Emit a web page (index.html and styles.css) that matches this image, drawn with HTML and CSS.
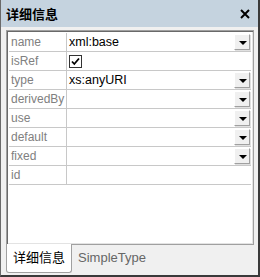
FILE: index.html
```html
<!DOCTYPE html>
<html>
<head>
<meta charset="utf-8">
<link rel="stylesheet" href="styles.css">
</head>
<body>
<div class="window">
  <div class="titlebar">
    <span class="title">详细信息</span>
    <svg class="close" width="10" height="10" viewBox="0 0 10 10"><path d="M1 1 L9 9 M9 1 L1 9" stroke="#000" stroke-width="2"/></svg>
  </div>
  <div class="content">
    <div class="grid">
      <div class="row"><div class="label">name</div><div class="value">xml:base<span class="dd"></span></div></div>
      <div class="row"><div class="label">isRef</div><div class="value"><span class="check">
        <svg width="11" height="11" viewBox="0 0 11 11"><path d="M2 5.5 L4.3 8 L9 2.5" fill="none" stroke="#000" stroke-width="1.8"/></svg>
      </span></div></div>
      <div class="row"><div class="label">type</div><div class="value">xs:anyURI<span class="dd"></span></div></div>
      <div class="row"><div class="label">derivedBy</div><div class="value"><span class="dd"></span></div></div>
      <div class="row"><div class="label">use</div><div class="value"><span class="dd"></span></div></div>
      <div class="row"><div class="label">default</div><div class="value"><span class="dd"></span></div></div>
      <div class="row"><div class="label">fixed</div><div class="value"><span class="dd"></span></div></div>
      <div class="row"><div class="label">id</div><div class="value"></div></div>
    </div>
    <div class="tabs">
      <div class="tab active">详细信息</div>
      <div class="tab">SimpleType</div>
    </div>
  </div>
</div>
</body>
</html>
```
FILE: styles.css
```css
html, body { margin: 0; padding: 0; }
body { width: 260px; height: 277px; overflow: hidden; background: #f0f0f0; font-family: "Liberation Sans", "Noto Sans CJK SC", sans-serif; }
.window {
  width: 260px; height: 277px; box-sizing: border-box;
  border-left: 1px solid #6a6a6a; border-right: 2px solid #3a3a3a; border-bottom: 2px solid #3a3a3a;
  display: flex; flex-direction: column; background: #f0f0f0;
}
.titlebar {
  height: 27px; background: #c5d3df; display: flex; align-items: center; justify-content: space-between;
  padding: 0 8px 0 5px; flex: none;
}
.title { font-family: "Noto Sans CJK SC", sans-serif; font-weight: bold; font-size: 13px; color: #000; }
.close { display: block; }
.content { flex: 1; display: flex; flex-direction: column; padding: 3px 4px 0 5px; }
.grid {
  flex: 1; background: #fff; border: 1px solid #a0a0a0; box-shadow: inset 1px 1px 0 #696969, inset -1px -1px 0 #e3e3e3;
  padding: 2px 2px; display: flex; flex-direction: column;
}
.row { display: flex; height: 18px; border-bottom: 1px solid #c8c8c8; font-size: 12px; }
.label { width: 55px; color: #808080; border-right: 1px solid #c8c8c8; padding-left: 2px; line-height: 18px; overflow: hidden; white-space: nowrap; }
.value { flex: 1; position: relative; padding-left: 2px; line-height: 18px; color: #000; font-size: 12.5px; }
.dd {
  position: absolute; right: 1px; top: 1px; width: 16px; height: 16px; box-sizing: border-box;
  background: #f0f0f0; border: 1px solid #fff; border-right-color: #a0a0a0; border-bottom-color: #a0a0a0;
  box-shadow: 1px 1px 0 #e0e0e0;
}
.dd::after {
  content: ""; position: absolute; left: 3.5px; top: 6px; border-left: 4px solid transparent; border-right: 4px solid transparent; border-top: 4px solid #000;
}
.check { display: inline-block; width: 11px; height: 11px; border: 1px solid #333; margin-top: 3px; vertical-align: top; }
.check svg { display: block; }
.tabs { height: 30px; display: flex; align-items: flex-start; flex: none; }
.tab { font-size: 13px; color: #666; padding: 2px 6px 0 6px; height: 24px; line-height: 22px; }
.tab.active { background: #fff; color: #000; border: 1px solid #a0a0a0; border-top: none; border-radius: 0 0 3px 3px; margin-top: -1px; height: 26px; font-family: "Noto Sans CJK SC", sans-serif; }
```
